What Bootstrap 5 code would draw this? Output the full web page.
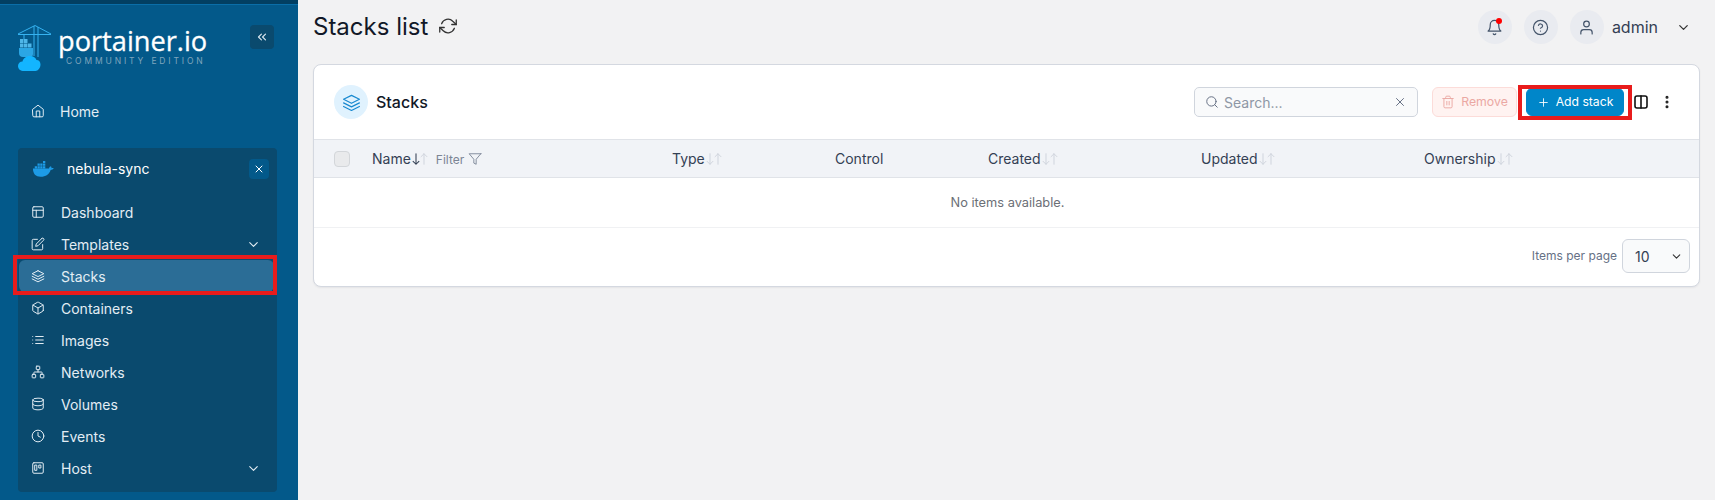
<!DOCTYPE html>
<html lang="en">
<head>
<meta charset="utf-8">
<title>Stacks list</title>
<link rel="stylesheet" href="https://cdn.jsdelivr.net/npm/bootstrap@5.3.0/dist/css/bootstrap.min.css">
<style>
html,body{height:500px;overflow:hidden}
body{font-family:Inter,"Liberation Sans",sans-serif;background:#f2f2f3;color:#111827;font-size:14px}
.ico{width:1em;height:1em;fill:none;stroke:currentColor;stroke-width:2;stroke-linecap:round;stroke-linejoin:round;flex:none}
.shell{height:500px}
.side{width:298px;flex:none;background:#03598a;border-top:4px solid #023f62;box-shadow:inset 0 1px 0 #0a6ea8;color:#e3edf4;height:500px;overflow:hidden}
.brand{height:91px;padding:21px 24px 0 18px}
.brand-words{margin-left:6px;line-height:1}
.brand-name{font-family:"Open Sans",sans-serif;font-size:27.2px;color:#fff;line-height:30px;margin-top:1px;-webkit-text-stroke:.3px #fff}
.brand-sub{font-size:8.5px;letter-spacing:2.85px;color:#7fa5bd;margin:0 0 0 8px;line-height:10px;white-space:nowrap}
.collapse-btn{width:24px;height:24px;background:#0a4a6e;border-radius:4px;color:#dbe7ef;font-size:14px;margin-left:auto}
.nav-row{height:32px;padding-left:13px;gap:16px;color:#e3edf4;font-size:14px;text-decoration:none;position:relative;border-radius:6px}
.nav-row .ico{font-size:14px;stroke-width:1.7}
.home-row{margin:0 0 21px 18px;width:259px;gap:15px}
.env{margin-left:18px;width:259px;height:344px;background:#0a4a6e;border-radius:4px}
.env-head{height:48px;padding:0 8px 7px 14px}
.env-name{color:#fff;margin-left:13px;font-size:14px}
.env-x{width:20px;height:20px;background:#03598a;border-radius:4px;color:#fff;font-size:12px;margin-left:auto}
.nav-row .chev{margin-left:auto;margin-right:16px;font-size:15px}
.nav-row.now{background:#2b6d96;margin-left:1px;margin-right:3px;padding-left:12px}
.mark-box{position:absolute;border:4px solid #e81c1c;pointer-events:none}
.mark-side{left:-6px;right:-3px;top:-5px;bottom:-3px}
.mark-add{left:-9px;right:-9px;top:-4px;bottom:-5px}
.top{height:64px;padding:0 24px 10px 15px}
.page-title{font-size:24px;font-weight:400;margin:0;line-height:1}
.page-title .ico{font-size:18px;margin-left:4px;color:#333;stroke-width:1.7;vertical-align:0}
.top-tools{gap:12px}
.round{width:34px;height:34px;border-radius:50%;background:#e9ebf0;color:#44546a;font-size:17px;position:relative}
.round .ico{stroke-width:1.7}
.dot{position:absolute;width:6px;height:6px;background:#f00;border-radius:50%;top:8px;right:10px}
.who{font-size:16px;color:#344054;margin:0 18px 0 8px}
.top-chev{font-size:15px;color:#333}
.panel{margin-left:15px;width:1387px;height:223px;border:1px solid #d4d8e0;border-radius:8px;background:#fff;box-shadow:0 1px 2px rgba(16,24,40,.06);overflow:hidden}
.panel-head{height:74px;padding:0 24px 0 20px}
.head-ico{width:34px;height:34px;border-radius:50%;background:#e0f2fe;color:#1a8ad0;font-size:19px}
.head-ico .ico{stroke-width:1.5}
.head-title{font-size:16px;font-weight:500;margin-left:8px}
.finder{width:224px;height:30px;background:#f9fafb;border:1px solid #d0d5dd;border-radius:5px;padding:0 10px;color:#667085;margin-right:14px}
.finder .ico{font-size:14px;stroke-width:1.7}
.finder span{flex:1;margin-left:5px;color:#8e97a5;font-size:14px}
.rm-btn{width:85px;height:30px;padding:0;--bs-btn-disabled-border-color:#fcdcd9;--bs-btn-disabled-bg:#fff3f1;--bs-btn-disabled-color:#eba8a3;--bs-btn-disabled-opacity:1;font-size:12.3px;border-radius:6px;gap:6px}
.rm-btn .ico{font-size:14px;stroke-width:1.6}
.add-btn{width:98px;height:28px;padding:0;--bs-btn-bg:#0086c9;--bs-btn-color:#fff;--bs-btn-border-color:#0086c9;font-size:12.2px;border-radius:6px;gap:6px;margin-left:9px;position:relative}
.add-btn .ico{font-size:13px;stroke-width:1.6}
.col-ico{font-size:16px;color:#111;margin-left:9px;stroke-width:2.4}
.kebab{font-size:16px;color:#222;margin-left:10px;stroke-width:2.6}
.grid-tbl{table-layout:fixed;width:1385px;margin:0;font-size:14px;color:#344054}
.grid-tbl col.c0{width:42px}.grid-tbl col.c1{width:300px}.grid-tbl col.c2{width:163px}.grid-tbl col.c3{width:153px}.grid-tbl col.c4{width:213px}.grid-tbl col.c5{width:223px}
.grid-tbl th{background:#f1f3f7;font-weight:400;height:38px;padding:0 0 0 16px;vertical-align:middle;border-top:1px solid #e0e3e8;border-bottom:1px solid #e0e3e8;color:#344054;white-space:nowrap}
.grid-tbl th:first-child{padding-left:20px}
.grid-tbl td{height:50px;text-align:center;font-size:12.8px;color:#6b6f76;padding:0 0 0 2px;vertical-align:middle;border-bottom:1px solid #f0f1f3}
.tick{width:16px;height:16px;background:#e9eaec;border:1px solid #d3d6da;border-radius:4px;display:block}
.sort{font-size:14px;color:#cdd2da;stroke-width:1.6;vertical-align:-2px;margin-left:-2px}
.sort+.sort{margin-left:-6px}
.sort.on{color:#344054;stroke-width:1.8}
.flt{font-size:12px;color:#7b8494;margin-left:5px}
.flt .ico{font-size:14px;stroke-width:1.3;margin-left:4px;vertical-align:-2px;color:#667085}
.panel-foot{height:60px;padding:0 9px 4px 0;font-size:12px;color:#667085}
.size-pick{width:68px;height:34px;background:#f9fafb;border:1px solid #d0d5dd;border-radius:6px;margin-left:5px;padding:0 6px 0 12px;color:#344054;font-size:14px}
.size-pick .ico{margin-left:auto;font-size:13px;color:#333}
.whale{width:22px;height:16px;flex:none;fill:#1d9be6}
.logo{width:34px;height:46px;flex:none}
</style>
</head>
<body>
<svg width="0" height="0" class="position-absolute">
<symbol id="i-layers" viewBox="0 0 24 24"><polygon points="12 3 2 8 12 13 22 8 12 3"/><polyline points="2 17 12 22 22 17"/><polyline points="2 12.5 12 17.5 22 12.5"/></symbol>
<symbol id="i-home" viewBox="0 0 24 24"><path d="m3 9 9-7 9 7v11a2 2 0 0 1-2 2H5a2 2 0 0 1-2-2z"/><polyline points="9 22 9 12 15 12 15 22"/></symbol>
<symbol id="i-dash" viewBox="0 0 24 24"><rect x="3" y="3" width="18" height="18" rx="2"/><path d="M3 9h18M9 21V9"/></symbol>
<symbol id="i-edit" viewBox="0 0 24 24"><path d="M11 4H4a2 2 0 0 0-2 2v14a2 2 0 0 0 2 2h14a2 2 0 0 0 2-2v-7"/><path d="M18.5 2.5a2.121 2.121 0 0 1 3 3L12 15l-4 1 1-4 9.5-9.5z"/></symbol>
<symbol id="i-box" viewBox="0 0 24 24"><path d="M21 16V8a2 2 0 0 0-1-1.730l-7-4a2 2 0 0 0-2 0l-7 4A2 2 0 0 0 3 8v8a2 2 0 0 0 1 1.730l7 4a2 2 0 0 0 2 0l7-4A2 2 0 0 0 21 16z"/><polyline points="3.27 6.96 12 12.01 20.73 6.96"/><line x1="12" y1="22.08" x2="12" y2="12"/></symbol>
<symbol id="i-list" viewBox="0 0 24 24"><path d="M8 6h13M8 12h13M8 18h13M3 6h.01M3 12h.01M3 18h.01"/></symbol>
<symbol id="i-net" viewBox="0 0 24 24"><rect x="9" y="2" width="6" height="6" rx="1"/><rect x="2" y="16" width="6" height="6" rx="1"/><rect x="16" y="16" width="6" height="6" rx="1"/><path d="M5 16v-3a1 1 0 0 1 1-1h12a1 1 0 0 1 1 1v3M12 12V8"/></symbol>
<symbol id="i-db" viewBox="0 0 24 24"><ellipse cx="12" cy="5" rx="9" ry="3"/><path d="M21 12c0 1.66-4 3-9 3s-9-1.34-9-3"/><path d="M3 5v14c0 1.66 4 3 9 3s9-1.34 9-3V5"/></symbol>
<symbol id="i-clock" viewBox="0 0 24 24"><circle cx="12" cy="12" r="10"/><polyline points="12 6 12 12 16 14"/></symbol>
<symbol id="i-host" viewBox="0 0 24 24"><rect x="3" y="3" width="18" height="18" rx="2"/><rect x="7" y="7" width="3" height="9"/><rect x="14" y="7" width="3" height="5"/></symbol>
<symbol id="i-chev" viewBox="0 0 24 24"><polyline points="6 9 12 15 18 9"/></symbol>
<symbol id="i-dbl" viewBox="0 0 24 24"><polyline points="11 17 6 12 11 7"/><polyline points="18 17 13 12 18 7"/></symbol>
<symbol id="i-x" viewBox="0 0 24 24"><path d="M18 6 6 18M6 6l12 12"/></symbol>
<symbol id="i-sync" viewBox="0 0 24 24"><path d="M23 4v6h-6"/><path d="M1 20v-6h6"/><path d="M3.51 9a9 9 0 0 1 14.85-3.36L23 10M1 14l4.64 4.36A9 9 0 0 0 20.49 15"/></symbol>
<symbol id="i-bell" viewBox="0 0 24 24"><path d="M18 8A6 6 0 0 0 6 8c0 7-3 9-3 9h18s-3-2-3-9"/><path d="M13.73 21a2 2 0 0 1-3.46 0"/></symbol>
<symbol id="i-help" viewBox="0 0 24 24"><circle cx="12" cy="12" r="10"/><path d="M9.09 9a3 3 0 0 1 5.83 1c0 2-3 3-3 3M12 17h.01"/></symbol>
<symbol id="i-user" viewBox="0 0 24 24"><path d="M20 21v-2a4 4 0 0 0-4-4H8a4 4 0 0 0-4 4v2"/><circle cx="12" cy="7" r="4"/></symbol>
<symbol id="i-search" viewBox="0 0 24 24"><circle cx="11" cy="11" r="8"/><line x1="21" y1="21" x2="16.65" y2="16.65"/></symbol>
<symbol id="i-trash" viewBox="0 0 24 24"><polyline points="3 6 5 6 21 6"/><path d="M19 6v14a2 2 0 0 1-2 2H7a2 2 0 0 1-2-2V6m3 0V4a2 2 0 0 1 2-2h4a2 2 0 0 1 2 2v2"/><line x1="10" y1="11" x2="10" y2="17"/><line x1="14" y1="11" x2="14" y2="17"/></symbol>
<symbol id="i-plus" viewBox="0 0 24 24"><path d="M12 5v14M5 12h14"/></symbol>
<symbol id="i-cols" viewBox="0 0 24 24"><rect x="3" y="3" width="18" height="18" rx="3"/><path d="M12 3v18"/></symbol>
<symbol id="i-more" viewBox="0 0 24 24"><circle cx="12" cy="5" r="1"/><circle cx="12" cy="12" r="1"/><circle cx="12" cy="19" r="1"/></symbol>
<symbol id="i-filter" viewBox="0 0 24 24"><polygon points="22 3 2 3 10 12.46 10 19 14 21 14 12.46 22 3"/></symbol>
<symbol id="i-down" viewBox="0 0 24 24"><path d="M12 3v18M7 16l5 5 5-5"/></symbol>
<symbol id="i-up" viewBox="0 0 24 24"><path d="M12 21V3M7 8l5-5 5 5"/></symbol>
</svg>

<div class="shell d-flex">
  <aside class="side">
    <div class="brand d-flex align-items-start">
      <svg class="logo" viewBox="0 0 34 46" aria-hidden="true">
        <g fill="none" stroke="#35b2f0" stroke-width="1"><path d="M0 9.500H33M0 9 17 .5 33 9M16 1v30M20 2v30M6 9.500v5"/></g>
        <g fill="#4fb6e8"><rect x="2" y="14" width="3.500" height="4"/><rect x="6" y="14" width="3.500" height="4"/><rect x="2" y="18.500" width="3.500" height="4"/><rect x="6" y="18.500" width="3.500" height="4"/><rect x="10" y="18.500" width="3.500" height="4"/></g>
        <path fill="#2ba6e4" d="M1 23h14v6a3 3 0 0 1-3 3H5a4 4 0 0 1-4-4z"/>
        <path fill="#13b5ff" d="M6 46c-3.500 0-6-2-6-5 0-2.500 2-4.500 4.500-4.500C5 33.500 8 31 12 31c3 0 5.500 1.500 6.500 4 2.500 0 4 2 4 4.500 0 3.500-2.500 6.500-5 6.500z"/>
      </svg>
      <div class="brand-words">
        <div class="brand-name">portainer.io</div>
        <div class="brand-sub">COMMUNITY EDITION</div>
      </div>
      <div class="collapse-btn d-flex align-items-center justify-content-center"><svg class="ico"><use href="#i-dbl"/></svg></div>
    </div>
    <a class="nav-row home-row d-flex align-items-center" href="#"><svg class="ico"><use href="#i-home"/></svg>Home</a>
    <div class="env">
      <div class="env-head d-flex align-items-center">
        <svg class="whale" viewBox="0 0 24 17" aria-hidden="true"><path d="M1 8h17.500c.4-1.500 1.500-2.300 2.200-2.400.5.800.7 1.500.6 2 .8-.3 1.600-.2 2.400.2-.7 1.300-2 1.800-3.400 1.800C19 14 15 17 9.500 17 4 17 1.200 14 1 8z"/><path d="M3 5h2.500v2.500H3zM6 5h2.500v2.500H6zM9 5h2.500v2.500H9zM12 5h2.500v2.500H12zM6 2h2.500v2.500H6zM9 2h2.500v2.500H9zM12 2h2.500v2.500H12zM12-1h2.500v2.500H12z" transform="translate(0 .5)"/></svg>
        <span class="env-name">nebula-sync</span>
        <div class="env-x d-flex align-items-center justify-content-center"><svg class="ico"><use href="#i-x"/></svg></div>
      </div>
      <a class="nav-row d-flex align-items-center" href="#"><svg class="ico"><use href="#i-dash"/></svg>Dashboard</a>
      <a class="nav-row d-flex align-items-center" href="#"><svg class="ico"><use href="#i-edit"/></svg>Templates<svg class="ico chev"><use href="#i-chev"/></svg></a>
      <a class="nav-row now d-flex align-items-center" href="#"><svg class="ico"><use href="#i-layers"/></svg>Stacks<span class="mark-box mark-side"></span></a>
      <a class="nav-row d-flex align-items-center" href="#"><svg class="ico"><use href="#i-box"/></svg>Containers</a>
      <a class="nav-row d-flex align-items-center" href="#"><svg class="ico"><use href="#i-list"/></svg>Images</a>
      <a class="nav-row d-flex align-items-center" href="#"><svg class="ico"><use href="#i-net"/></svg>Networks</a>
      <a class="nav-row d-flex align-items-center" href="#"><svg class="ico"><use href="#i-db"/></svg>Volumes</a>
      <a class="nav-row d-flex align-items-center" href="#"><svg class="ico"><use href="#i-clock"/></svg>Events</a>
      <a class="nav-row d-flex align-items-center" href="#"><svg class="ico"><use href="#i-host"/></svg>Host<svg class="ico chev"><use href="#i-chev"/></svg></a>
    </div>
  </aside>
  <main class="flex-grow-1">
    <div class="top d-flex align-items-center">
      <h1 class="page-title">Stacks list <svg class="ico"><use href="#i-sync"/></svg></h1>
      <div class="top-tools d-flex align-items-center ms-auto">
        <div class="round d-flex align-items-center justify-content-center"><svg class="ico"><use href="#i-bell"/></svg><span class="dot"></span></div>
        <div class="round d-flex align-items-center justify-content-center"><svg class="ico"><use href="#i-help"/></svg></div>
        <div class="d-flex align-items-center">
          <div class="round d-flex align-items-center justify-content-center"><svg class="ico"><use href="#i-user"/></svg></div>
          <span class="who">admin</span>
          <svg class="ico top-chev"><use href="#i-chev"/></svg>
        </div>
      </div>
    </div>
    <section class="panel">
      <div class="panel-head d-flex align-items-center">
        <div class="head-ico d-flex align-items-center justify-content-center"><svg class="ico"><use href="#i-layers"/></svg></div>
        <span class="head-title">Stacks</span>
        <div class="finder d-flex align-items-center ms-auto"><svg class="ico"><use href="#i-search"/></svg><span>Search...</span><svg class="ico"><use href="#i-x"/></svg></div>
        <button class="btn rm-btn d-flex align-items-center justify-content-center" disabled><svg class="ico"><use href="#i-trash"/></svg>Remove</button>
        <button class="btn add-btn d-flex align-items-center justify-content-center"><svg class="ico"><use href="#i-plus"/></svg>Add stack<span class="mark-box mark-add"></span></button>
        <svg class="ico col-ico"><use href="#i-cols"/></svg>
        <svg class="ico kebab"><use href="#i-more"/></svg>
      </div>
      <table class="table grid-tbl">
        <colgroup><col class="c0"><col class="c1"><col class="c2"><col class="c3"><col class="c4"><col class="c5"><col></colgroup>
        <thead><tr>
          <th><span class="tick"></span></th>
          <th>Name<svg class="ico sort on"><use href="#i-down"/></svg><svg class="ico sort"><use href="#i-up"/></svg><span class="flt">Filter<svg class="ico"><use href="#i-filter"/></svg></span></th>
          <th>Type<svg class="ico sort"><use href="#i-down"/></svg><svg class="ico sort"><use href="#i-up"/></svg></th>
          <th>Control</th>
          <th>Created<svg class="ico sort"><use href="#i-down"/></svg><svg class="ico sort"><use href="#i-up"/></svg></th>
          <th>Updated<svg class="ico sort"><use href="#i-down"/></svg><svg class="ico sort"><use href="#i-up"/></svg></th>
          <th>Ownership<svg class="ico sort"><use href="#i-down"/></svg><svg class="ico sort"><use href="#i-up"/></svg></th>
        </tr></thead>
        <tbody><tr><td colspan="7">No items available.</td></tr></tbody>
      </table>
      <div class="panel-foot d-flex align-items-center justify-content-end">
        <span>Items per page</span>
        <div class="size-pick d-flex align-items-center">10<svg class="ico"><use href="#i-chev"/></svg></div>
      </div>
    </section>
  </main>
</div>
<script src="https://cdn.jsdelivr.net/npm/bootstrap@5.3.0/dist/js/bootstrap.bundle.min.js"></script>
</body>
</html>
